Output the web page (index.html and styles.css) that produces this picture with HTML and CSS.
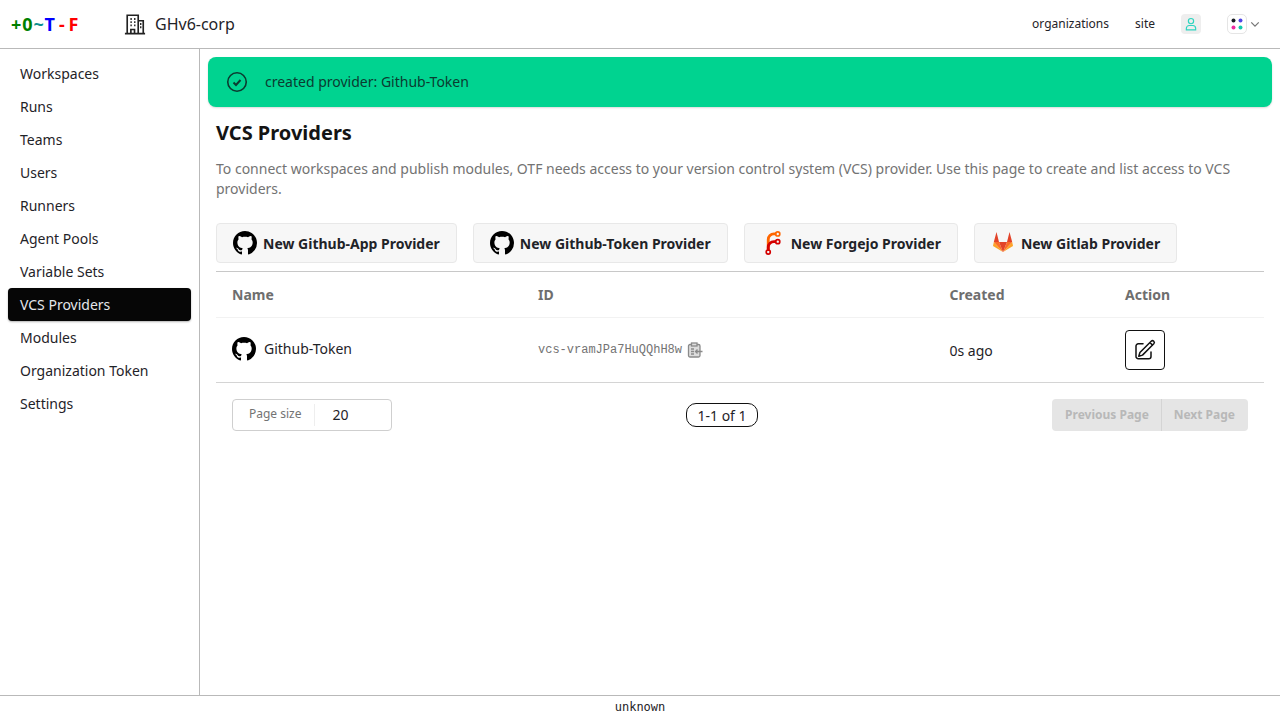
FILE: index.html
```html
<!DOCTYPE html>
<html lang="en">
<head>
<meta charset="utf-8">
<title>VCS Providers</title>
<link rel="stylesheet" href="styles.css">
</head>
<body>
<svg class="defs" width="0" height="0" aria-hidden="true">
  <symbol id="gh" viewBox="0 0 16 16"><path fill="#000" d="M8 0C3.58 0 0 3.58 0 8c0 3.54 2.29 6.53 5.47 7.59.4.07.55-.17.55-.38 0-.19-.01-.82-.01-1.49-2.01.37-2.53-.49-2.69-.94-.09-.23-.48-.94-.82-1.13-.28-.15-.68-.52-.01-.53.63-.01 1.08.58 1.23.82.72 1.21 1.87.87 2.33.66.07-.52.28-.87.51-1.07-1.78-.2-3.64-.89-3.64-3.95 0-.87.31-1.59.82-2.15-.08-.2-.36-1.02.08-2.12 0 0 .67-.21 2.2.82.64-.18 1.32-.27 2-.27.68 0 1.36.09 2 .27 1.53-1.04 2.2-.82 2.2-.82.44 1.1.16 1.92.08 2.12.51.56.82 1.27.82 2.15 0 3.07-1.87 3.75-3.65 3.95.29.25.54.73.54 1.48 0 1.07-.01 1.93-.01 2.2 0 .21.15.46.55.38A8.013 8.013 0 0016 8c0-4.42-3.58-8-8-8z"/></symbol>
</svg>
<header class="topbar">
  <div class="brand">
    <a class="logo"><span class="c-green">+0</span><span class="c-teal">~</span><span class="c-blue">T</span><span class="c-red dash">-</span><span class="c-red">F</span></a>
    <div class="org">
      <svg class="org-icon" viewBox="0 0 24 24" fill="none" stroke="#222" stroke-width="1.800"><path d="M1 22.500h22M3.500 22.500V2.500h12V22.500M15.500 8.500h5.500V22.500"/><path d="M7 6.500h1.500M11 6.500h1.500M7 10h1.500M11 10h1.500M7 13.500h1.500M11 13.500h1.500M17.500 12h1.500M17.500 15.500h1.500" stroke-width="2"/><path d="M7.500 22.500v-4.500h4v4.500"/></svg>
      <span>GHv6-corp</span>
    </div>
  </div>
  <nav class="topnav">
    <a class="toplink">organizations</a>
    <a class="toplink">site</a>
    <span class="user-btn">
      <svg viewBox="0 0 24 24" width="14" height="14" fill="none" stroke="#2dd4bf" stroke-width="2"><circle cx="12" cy="7" r="4.500"/><path d="M4 22v-2.500a5 5 0 0 1 5-5h6a5 5 0 0 1 5 5V22z"/></svg>
    </span>
    <span class="theme">
      <span class="theme-box">
        <svg viewBox="0 0 16 16" width="16" height="16"><circle cx="4.500" cy="4.500" r="2" fill="#191e24"/><circle cx="11.500" cy="4.500" r="2" fill="#4f46e5"/><circle cx="4.500" cy="11.500" r="2" fill="#ec2aa0"/><circle cx="11.500" cy="11.500" r="2" fill="#14c9ae"/></svg>
      </span>
      <svg class="chev" viewBox="0 0 12 12" width="10" height="10" fill="none" stroke="#777" stroke-width="1.500"><path d="M1.500 4l4.500 4.500L10.500 4"/></svg>
    </span>
  </nav>
</header>

<div class="shell">
  <aside class="sidebar">
    <a class="side-item">Workspaces</a>
    <a class="side-item">Runs</a>
    <a class="side-item">Teams</a>
    <a class="side-item">Users</a>
    <a class="side-item">Runners</a>
    <a class="side-item">Agent Pools</a>
    <a class="side-item">Variable Sets</a>
    <a class="side-item active">VCS Providers</a>
    <a class="side-item">Modules</a>
    <a class="side-item">Organization Token</a>
    <a class="side-item">Settings</a>
  </aside>

  <main class="content">
    <div class="alert">
      <svg viewBox="0 0 24 24" width="24" height="24" fill="none" stroke="#0b3b30" stroke-width="1.600"><circle cx="12" cy="12" r="9.250"/><path d="M8.500 12.500l2.500 2.500 4.500-5" stroke-width="2"/></svg>
      <span>created provider: Github-Token</span>
    </div>

    <div class="page">
      <h1 class="title">VCS Providers</h1>
      <p class="intro">To connect workspaces and publish modules, OTF needs access to your version control system (VCS) provider. Use this page to create and list access to VCS providers.</p>

      <div class="actions">
        <a class="btn"><svg class="bi"><use href="#gh"/></svg><span class="btn-label">New Github-App Provider</span></a>
        <a class="btn"><svg class="bi"><use href="#gh"/></svg><span class="btn-label">New Github-Token Provider</span></a>
        <a class="btn"><svg class="bi" viewBox="0 0 212 212" fill="none"><g transform="translate(6 6)"><path d="M58 168V70a50 50 0 0 1 50-50h20" stroke="#ff6600" stroke-width="25"/><path d="M58 168v-30a50 50 0 0 1 50-50h20" stroke="#d40000" stroke-width="25"/><circle cx="142" cy="20" r="18" stroke="#ff6600" stroke-width="15"/><circle cx="142" cy="88" r="18" stroke="#d40000" stroke-width="15"/><circle cx="58" cy="180" r="18" stroke="#d40000" stroke-width="15"/></g></svg><span class="btn-label">New Forgejo Provider</span></a>
        <a class="btn"><svg class="bi" viewBox="0 0 24 24"><path fill="#fca326" d="M2.800 11L2 15l10 6z"/><path fill="#fca326" d="M21.200 11l.8 4-10 6z"/><path fill="#fc6d26" d="M2.800 11H8l4 10z"/><path fill="#fc6d26" d="M21.200 11H16l-4 10z"/><path fill="#e24329" d="M8 11h8l-4 10z"/><path fill="#e24329" d="M5.500 1L2.800 11H8zM18.500 1l2.700 10H16z"/></svg><span class="btn-label">New Gitlab Provider</span></a>
      </div>

      <table class="grid">
        <thead>
          <tr><th class="col-name">Name</th><th class="col-id">ID</th><th class="col-created">Created</th><th>Action</th></tr>
        </thead>
        <tbody>
          <tr>
            <td><span class="name-cell"><svg class="ri"><use href="#gh"/></svg>Github-Token</span></td>
            <td><span class="id-cell"><span class="mono">vcs-vramJPa7HuQQhH8w</span>
              <svg viewBox="0 0 16 16" width="16" height="16" fill="none" stroke="#8a8a8a" stroke-width="1.300"><rect x="1.500" y="2.500" width="11.500" height="12.500" rx="1.500" fill="#ddd"/><rect x="4.500" y="1" width="5.500" height="3" fill="#ddd"/><path d="M4 7h3M4 9.500h3M4 12h3M15.500 9.500H8.500M10.500 7.500l-2 2 2 2"/></svg></span></td>
            <td class="created-cell">0s ago</td>
            <td><a class="edit"><svg viewBox="0 0 24 24" width="24" height="24" fill="none" stroke="#111" stroke-width="1.500" stroke-linejoin="round" stroke-linecap="round"><path d="M16.900 4.500l2.600 2.600M18.200 3.200a1.840 1.840 0 0 1 2.600 2.600L9.500 17.100l-3.700 1.100 1.100-3.700z"/><path d="M18 14v4.500a2.250 2.250 0 0 1-2.250 2.250h-10.500A2.250 2.250 0 0 1 3 18.500V8a2.250 2.250 0 0 1 2.250-2.250H10"/></svg></a></td>
          </tr>
        </tbody>
      </table>

      <div class="pager">
        <div class="pagesize"><span class="ps-label">Page size</span><span class="ps-value">20</span></div>
        <span class="count">1-1 of 1</span>
        <div class="pgbtns"><span class="pgbtn">Previous Page</span><span class="pgbtn">Next Page</span></div>
      </div>
    </div>
  </main>
</div>

<footer class="foot">unknown</footer>
</body>
</html>
```
FILE: styles.css
```css
* { box-sizing: border-box; }
html, body { margin: 0; height: 100%; }
body {
  display: flex;
  flex-direction: column;
  height: 720px;
  overflow: hidden;
  background: #fff;
  color: #1f2328;
  font-family: "Noto Sans", sans-serif;
  font-size: 14px;
  line-height: 20px;
}
.defs { position: absolute; }

.topbar {
  height: 49px;
  flex: none;
  display: flex;
  align-items: center;
  justify-content: space-between;
  border-bottom: 1px solid #b9b9b9;
  padding: 0 20px 0 11px;
}
.brand { display: flex; align-items: center; gap: 44px; }
.logo {
  font-family: "Noto Sans", sans-serif;
  font-weight: 700;
  font-size: 18px;
  letter-spacing: .9px;
  width: 69px;
  white-space: nowrap;
  display: flex;
}
.c-green { color: #008000; }
.c-teal { color: #0b8f8f; }
.c-blue { color: #0000ff; }
.c-red { color: #ff0000; }
.dash { margin: 0 3px; }
.org { display: flex; align-items: center; gap: 9px; font-size: 16px; color: #1f2328; }
.org-icon { width: 22px; height: 22px; }
.topnav { display: flex; align-items: center; font-size: 12px; }
.toplink { margin-right: 26px; color: #1f2328; }
.user-btn {
  width: 20px; height: 20px; border-radius: 4px; background: #eeeeee;
  display: flex; align-items: center; justify-content: center; margin-right: 26px;
}
.theme { display: flex; align-items: center; gap: 3px; }
.theme-box {
  width: 20px; height: 20px; border: 1px solid #e5e5e5; border-radius: 5px;
  display: flex; align-items: center; justify-content: center;
}

.shell { flex: 1; display: flex; min-height: 0; }
.sidebar {
  width: 200px; flex: none;
  border-right: 1px solid #b9b9b9;
  padding: 8px 8px;
  display: flex; flex-direction: column;
}
.side-item {
  height: 33px; padding: 0 12px; display: flex; align-items: center;
  border-radius: 4px; color: #1f2328;
}
.side-item.active {
  background: #060606; color: #e5e7eb;
  box-shadow: 0 1px 2px rgba(0,0,0,.3);
}

.content { flex: 1; min-width: 0; padding: 8px; }
.alert {
  height: 50px; border-radius: 8px; background: #00d390; color: #0b3b30;
  display: flex; align-items: center; gap: 16px; padding: 0 17px;
  box-shadow: 0 1px 2px rgba(0,0,0,.15);
}
.page { padding: 0 8px; }
.title { margin: 12px 0 0; font-size: 20px; line-height: 28px; font-weight: 700; color: #141414; }
.intro { margin: 12px 0 0; color: #737373; line-height: 20px; }
.actions { display: flex; gap: 16px; margin-top: 24px; }
.btn {
  height: 40px; padding: 0 16px; display: flex; align-items: center; gap: 6px;
  background: #f7f7f7; border: 1px solid #e8e8e8; border-radius: 4px;
  font-weight: 700; color: #1f2328; white-space: nowrap;
}
.btn-label { margin-top: 2px; }
.bi { width: 24px; height: 24px; flex: none; }
.grid {
  width: 100%; border-collapse: collapse; margin-top: 8px; table-layout: fixed;
  border-top: 1px solid #c8c8c8; border-bottom: 1px solid #d4d4d4;
}
.grid th {
  height: 46px; text-align: left; padding: 0 16px; font-weight: 700; color: #6e6e6e;
  border-bottom: 1px solid #f2f2f2;
}
.grid td { height: 65px; padding: 0 16px; color: #1f2328; }
.col-name { width: 306px; }
.col-id { width: 411.500px; }
.col-created { width: 175.500px; }
.name-cell { display: flex; align-items: center; gap: 8px; margin-top: -2px; }
.ri { width: 24px; height: 24px; flex: none; }
.id-cell { display: flex; align-items: center; gap: 5px; }
.mono { font-family: "Liberation Mono", monospace; font-size: 12px; color: #737373; }
.grid td.created-cell { padding-top: 2px; }
.edit {
  width: 40px; height: 40px; border: 1px solid #111; border-radius: 4px;
  display: flex; align-items: center; justify-content: center;
}
.pager {
  display: flex; justify-content: space-between; align-items: center;
  padding: 16px 16px 0;
}
.pagesize {
  width: 160px; height: 32px; border: 1px solid #cfcfcf; border-radius: 4px;
  display: flex; align-items: center;
}
.ps-label {
  width: 82px; height: 22px; font-size: 12px; color: #737373; padding-left: 16px;
  border-right: 1px solid #eee; line-height: 20px;
}
.ps-value { padding-left: 17.500px; color: #1f2328; }
.count {
  border: 1px solid #111; border-radius: 10px; padding: 0 10.750px; height: 24px;
  line-height: 23px; color: #1f2328;
}
.pgbtns { display: flex; background: #e5e5e5; border-radius: 4px; height: 32px; }
.pgbtn {
  display: flex; align-items: center; padding: 0 11.800px 0 13px; font-size: 12px; font-weight: 700; color: #b8b8b8;
}
.pgbtn + .pgbtn { border-left: 1px solid #d4d4d4; padding: 0 13px 0 12px; }

.foot {
  height: 25px; flex: none; border-top: 1px solid #b9b9b9;
  text-align: center; font-family: "DejaVu Sans Mono", monospace; font-size: 12px; line-height: 22px;
  color: #1f2328;
}
```
